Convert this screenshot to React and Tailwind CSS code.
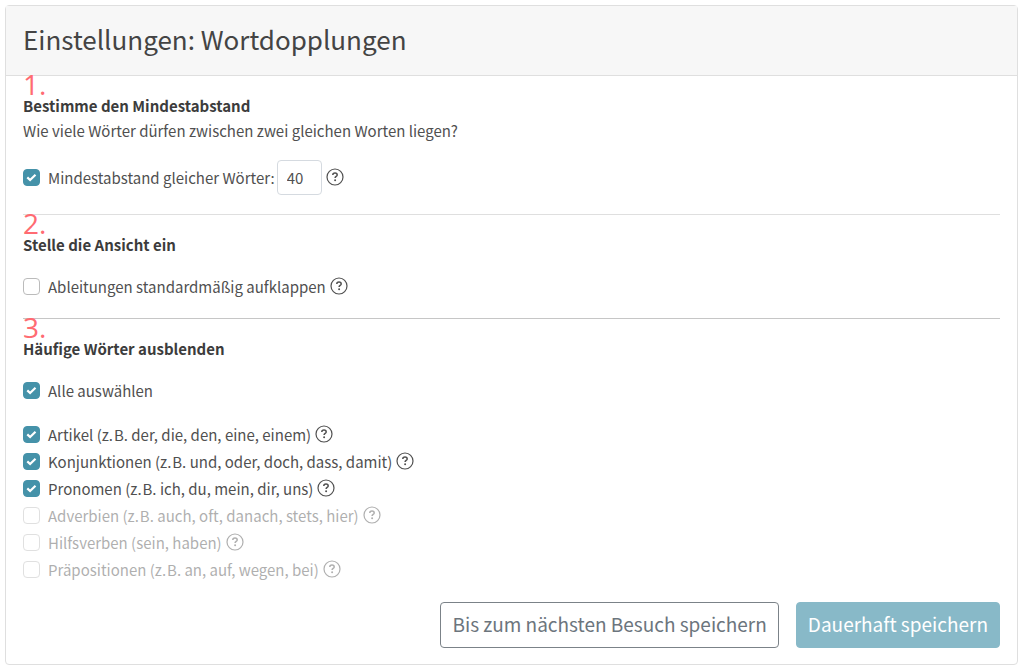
import { useState } from 'react';

const wordTypes = [
  { id: 'artikel', label: 'Artikel (z.\u200AB. der, die, den, eine, einem)', enabled: true },
  { id: 'konjunktionen', label: 'Konjunktionen (z.\u200AB. und, oder, doch, dass, damit)', enabled: true },
  { id: 'pronomen', label: 'Pronomen (z.\u200AB. ich, du, mein, dir, uns)', enabled: true },
  { id: 'adverbien', label: 'Adverbien (z.\u200AB. auch, oft, danach, stets, hier)', enabled: false },
  { id: 'hilfsverben', label: 'Hilfsverben (sein, haben)', enabled: false },
  { id: 'praepositionen', label: 'Präpositionen (z.\u200AB. an, auf, wegen, bei)', enabled: false },
];

const HelpButton = () => (
  <button type="button" aria-label="Hilfe" className="ml-1 shrink-0 pb-0.5 text-[#505050]">
    <svg viewBox="0 0 18 18" className="size-[18px]" fill="none" stroke="currentColor">
      <circle cx="9" cy="9" r="8" strokeWidth="1.2" />
      <path d="M6.8 7c0-1.2.9-1.9 2.2-1.9s2.2.7 2.2 1.8c0 1.5-2.1 1.5-2.1 3.1" strokeWidth="1.5" />
      <circle cx="9.1" cy="12.3" r="1" fill="currentColor" stroke="none" />
    </svg>
  </button>
);

const Checkbox = ({ id, label, checked, disabled, onChange }) => (
  <>
    <span className="relative mr-2 flex shrink-0">
      <input
        id={id}
        type="checkbox"
        checked={checked}
        disabled={disabled}
        onChange={onChange}
        className="peer size-[17px] appearance-none rounded border border-[#bbb] bg-white checked:border-[#4592a9] checked:bg-[#4592a9]"
      />
      <svg
        viewBox="0 0 17 17"
        className="pointer-events-none absolute inset-0 hidden size-[17px] peer-checked:block"
        fill="none"
        stroke="white"
        strokeWidth="2.2"
      >
        <path d="M4.3 8.4l2.8 2.6 5.4-5.2" />
      </svg>
    </span>
    <label htmlFor={id}>{label}</label>
  </>
);

const SectionTitle = ({ number, children }) => (
  <h2 className="font-bold text-[#3c3c3c]">
    <span className="block font-['Open_Sans',sans-serif] text-[28px] leading-[17px] font-normal text-[#ff6b72]">
      {number}.
    </span>
    {children}
  </h2>
);

const App = () => {
  const [minDistance, setMinDistance] = useState(true);
  const [distance, setDistance] = useState('40');
  const [expand, setExpand] = useState(false);
  const [selected, setSelected] = useState(['artikel', 'konjunktionen', 'pronomen']);

  const available = wordTypes.filter((type) => type.enabled).map((type) => type.id);
  const allSelected = available.every((id) => selected.includes(id));

  const toggleType = (id) => {
    setSelected(selected.includes(id) ? selected.filter((item) => item !== id) : [...selected, id]);
  };

  return (
    <div className="pt-[5px] pr-1.5 pb-1.5 pl-[5px] font-['Noto_Sans_CJK_SC',sans-serif] text-[15px] leading-[25px] text-[#505050]">
      <form className="rounded border border-[#dfdfdf] bg-white" onSubmit={(e) => e.preventDefault()}>
        <header className="border-b border-[#dfdfdf] bg-[#f7f7f7] px-[17px] pt-3.5 pb-[18px]">
          <h1 className="text-[26px] leading-[37px] text-[#444]">Einstellungen: Wortdopplungen</h1>
        </header>

        <div className="px-[17px] pb-4">
          {/* Minimum distance */}
          <section className="border-b border-[#dfdfdf] pb-[19px]">
            <SectionTitle number={1}>Bestimme den Mindestabstand</SectionTitle>
            <p>Wie viele Wörter dürfen zwischen zwei gleichen Worten liegen?</p>
            <div className="mt-[17px] flex items-center">
              <Checkbox
                id="min-distance"
                label="Mindestabstand gleicher Wörter:"
                checked={minDistance}
                onChange={() => setMinDistance(!minDistance)}
              />
              <input
                type="text"
                aria-label="Mindestabstand"
                value={distance}
                onChange={(e) => setDistance(e.target.value)}
                className="ml-0.5 h-[35px] w-[45px] rounded-sm border border-[#d5dae0] px-[9px]"
              />
              <HelpButton />
            </div>
          </section>

          {/* View */}
          <section className="border-b border-[#c6c6c6] pb-[19px]">
            <SectionTitle number={2}>Stelle die Ansicht ein</SectionTitle>
            <div className="mt-[17px] flex items-center">
              <Checkbox
                id="expand"
                label="Ableitungen standardmäßig aufklappen"
                checked={expand}
                onChange={() => setExpand(!expand)}
              />
              <HelpButton />
            </div>
          </section>

          {/* Frequent words */}
          <section>
            <SectionTitle number={3}>Häufige Wörter ausblenden</SectionTitle>
            <div className="mt-[17px] flex items-center">
              <Checkbox
                id="select-all"
                label="Alle auswählen"
                checked={allSelected}
                onChange={() => setSelected(allSelected ? [] : available)}
              />
            </div>
            <ul className="mt-[18px]">
              {wordTypes.map((type) => (
                <li key={type.id} className={type.enabled ? 'flex h-[27px] items-center' : 'flex h-[27px] items-center opacity-45'}>
                  <Checkbox
                    id={type.id}
                    label={type.label}
                    checked={selected.includes(type.id)}
                    disabled={!type.enabled}
                    onChange={() => toggleType(type.id)}
                  />
                  <HelpButton />
                </li>
              ))}
            </ul>
          </section>

          <div className="mt-[19px] flex flex-wrap justify-end gap-[17px] text-[19px]">
            <button type="submit" className="h-[46px] rounded border border-[#7b8288] px-[11px] pb-[3px] text-[#6c757d]">
              Bis zum nächsten Besuch speichern
            </button>
            <button type="submit" className="h-[46px] rounded border border-[#88b9c8] bg-[#88b9c8] px-[11px] pb-[3px] text-white">
              Dauerhaft speichern
            </button>
          </div>
        </div>
      </form>
    </div>
  );
};

export default App;
